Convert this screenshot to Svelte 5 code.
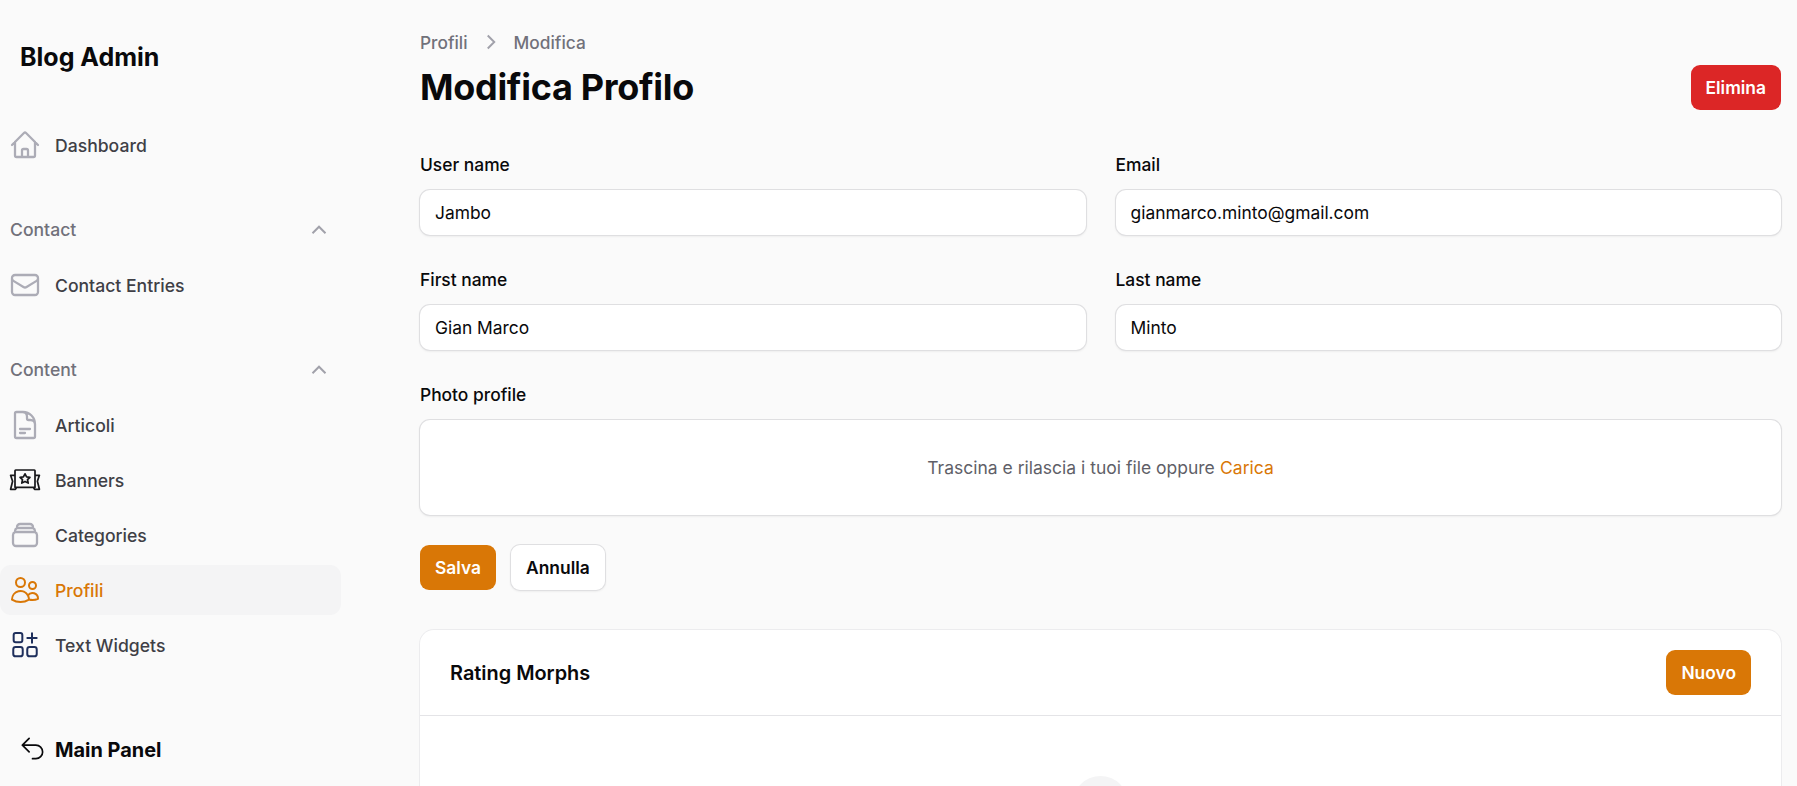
<script>
  const stroke = 1.5;
  let groups = [
    { items: [{ name: "Dashboard", icon: "home" }] },
    { label: "Contact", items: [{ name: "Contact Entries", icon: "mail" }] },
    {
      label: "Content",
      items: [
        { name: "Articoli", icon: "doc" },
        { name: "Banners", icon: "banner" },
        { name: "Categories", icon: "stack" },
        { name: "Profili", icon: "users", active: true },
        { name: "Text Widgets", icon: "squares" },
      ],
    },
  ];

  const paths = {
    home: "m2.25 12 8.954-8.955c.44-.439 1.152-.439 1.591 0L21.75 12M4.5 9.75v10.125c0 .621.504 1.125 1.125 1.125H9.75v-4.875c0-.621.504-1.125 1.125-1.125h2.25c.621 0 1.125.504 1.125 1.125V21h4.125c.621 0 1.125-.504 1.125-1.125V9.75M8.25 21h8.25",
    mail: "M21.75 6.75v10.5a2.25 2.25 0 0 1-2.25 2.25h-15a2.25 2.25 0 0 1-2.25-2.25V6.75m19.5 0A2.25 2.25 0 0 0 19.5 4.5h-15a2.25 2.25 0 0 0-2.25 2.25m19.5 0v.243a2.25 2.25 0 0 1-1.07 1.916l-7.5 4.615a2.25 2.25 0 0 1-2.36 0L3.32 8.91a2.25 2.25 0 0 1-1.07-1.916V6.75",
    doc: "M19.5 14.25v-2.625a3.375 3.375 0 0 0-3.375-3.375h-1.5A1.125 1.125 0 0 1 13.5 7.125v-1.5a3.375 3.375 0 0 0-3.375-3.375H8.25m0 12.75h7.5m-7.5 3H12M10.5 2.25H5.625c-.621 0-1.125.504-1.125 1.125v17.25c0 .621.504 1.125 1.125 1.125h12.75c.621 0 1.125-.504 1.125-1.125V11.25a9 9 0 0 0-9-9Z",
    stack: "M6 6.878V6a2.25 2.25 0 0 1 2.25-2.25h7.5A2.25 2.25 0 0 1 18 6v.878m-12 0c.235-.083.487-.128.75-.128h10.5c.263 0 .515.045.75.128m-12 0A2.25 2.25 0 0 0 4.5 9v.878m13.5-3A2.25 2.25 0 0 1 19.5 9v.878m0 0a2.246 2.246 0 0 0-.75-.128H5.25c-.263 0-.515.045-.75.128m15 0A2.25 2.25 0 0 1 21 12v6a2.25 2.25 0 0 1-2.25 2.25H5.25A2.25 2.25 0 0 1 3 18v-6c0-.98.626-1.813 1.5-2.122",
    users: "M15 19.128a9.38 9.38 0 0 0 2.625.372 9.337 9.337 0 0 0 4.121-.952 4.125 4.125 0 0 0-7.533-2.493M15 19.128v-.003c0-1.113-.285-2.16-.786-3.07M15 19.128v.106A12.318 12.318 0 0 1 8.624 21c-2.331 0-4.512-.645-6.374-1.766l-.001-.109a6.375 6.375 0 0 1 11.964-3.07M12 6.375a3.375 3.375 0 1 1-6.75 0 3.375 3.375 0 0 1 6.75 0Zm8.25 2.25a2.625 2.625 0 1 1-5.25 0 2.625 2.625 0 0 1 5.25 0Z",
    squares: "M17.250 3.250v7M13.750 6.750h7M5 3h3.500a1.500 1.500 0 0 1 1.500 1.500V8.500a1.500 1.500 0 0 1-1.500 1.500H5a1.500 1.500 0 0 1-1.500-1.500V4.500A1.500 1.500 0 0 1 5 3ZM5 13.500h3.500a1.800 1.800 0 0 1 1.800 1.800v3.400a1.800 1.800 0 0 1-1.800 1.800H5a1.800 1.800 0 0 1-1.800-1.800v-3.400A1.800 1.800 0 0 1 5 13.500ZM15.500 13.500H19a1.800 1.800 0 0 1 1.800 1.800v3.400a1.800 1.800 0 0 1-1.800 1.800h-3.500a1.800 1.800 0 0 1-1.800-1.800v-3.400a1.800 1.800 0 0 1 1.800-1.800Z",
    banner: "M5 4.500h14a.5.5 0 0 1 .5.5v12.500h-15V5a.5.5 0 0 1 .5-.5ZM4.500 8.500H1.200l1.500 4.500-1.500 6h3.600l1-1.500M19.500 8.500h3.300l-1.500 4.500 1.500 6h-3.600l-1-1.500M12 7.400l1.200 2.300 2.500.3-1.800 1.800.5 2.500-2.400-1.200-2.400 1.200.5-2.500-1.800-1.800 2.500-.3Z",
    back: "M9 15 3 9m0 0 6-6M3 9h12a6 6 0 0 1 0 12h-3",
  };
</script>

<div class="layout">
  <aside class="sidebar">
    <div class="brand">Blog Admin</div>

    <nav class="nav">
      {#each groups as group}
        <div class="group">
          {#if group.label}
            <div class="group-label">
              <span>{group.label}</span>
              <svg class="chev" viewBox="0 0 20 20" fill="none" stroke="currentColor" stroke-width={stroke}>
                <path d="M5 12.500l5-5 5 5" />
              </svg>
            </div>
          {/if}
          <ul>
            {#each group.items as item}
              <li class="item" class:active={item.active}>
                <svg
                  class="icon {item.icon}"
                  viewBox="0 0 24 24"
                  fill="none"
                  stroke="currentColor"
                  stroke-linecap="round"
                  stroke-linejoin="round"
                >
                  <path d={paths[item.icon]} />
                </svg>
                <span>{item.name}</span>
              </li>
            {/each}
          </ul>
        </div>
      {/each}
    </nav>

    <div class="main-panel">
      <svg class="icon-back" viewBox="0 0 24 24" fill="none" stroke="currentColor" stroke-width={stroke} stroke-linecap="round" stroke-linejoin="round">
        <path d={paths.back} />
      </svg>
      <span>Main Panel</span>
    </div>
  </aside>

  <main class="content">
    <div class="crumbs">
      <span>Profili</span>
      <svg viewBox="0 0 20 20" fill="none" stroke="currentColor" stroke-width="1.500"><path d="M7.500 5l5 5-5 5" /></svg>
      <span>Modifica</span>
    </div>

    <header class="page-head">
      <h1>Modifica Profilo</h1>
      <button class="btn danger">Elimina</button>
    </header>

    <form class="form" on:submit|preventDefault>
      <div class="grid">
        <label class="field">
          <span>User name</span>
          <input value="Jambo" />
        </label>
        <label class="field">
          <span>Email</span>
          <input value="gianmarco.minto@gmail.com" />
        </label>
        <label class="field">
          <span>First name</span>
          <input value="Gian Marco" />
        </label>
        <label class="field">
          <span>Last name</span>
          <input value="Minto" />
        </label>
      </div>

      <div class="field upload-field">
        <span>Photo profile</span>
        <div class="dropzone">Trascina e rilascia i tuoi file oppure <b>Carica</b></div>
      </div>

      <div class="actions">
        <button class="btn primary">Salva</button>
        <button class="btn plain" type="button">Annulla</button>
      </div>
    </form>

    <section class="card">
      <div class="card-head">
        <h2>Rating Morphs</h2>
        <button class="btn primary">Nuovo</button>
      </div>
      <div class="card-body">
        <div class="empty-circle"></div>
      </div>
    </section>
  </main>
</div>

<style>
  :global(body) {
    background: #fafafa;
    font-family: Inter, "Liberation Sans", sans-serif;
    color: #09090b;
    overflow: hidden;
  }

  .layout {
    display: flex;
    height: 786px;
    overflow: hidden;
  }

  .sidebar {
    width: 341px;
    flex: none;
    display: flex;
    flex-direction: column;
  }
  .brand {
    font-size: 25px;
    font-weight: 700;
    line-height: 28px;
    padding: 43px 0 0 20px;
  }
  .nav {
    margin-top: 49px;
    display: flex;
    flex-direction: column;
    gap: 45px;
  }
  ul {
    list-style: none;
    margin: 0;
    padding: 0;
    display: flex;
    flex-direction: column;
    gap: 5px;
  }
  .group-label {
    display: flex;
    align-items: center;
    justify-content: space-between;
    height: 27px;
    padding: 0 9px 0 10px;
    margin: 1px 0 17px;
    font-size: 17.600px;
    font-weight: 450;
    color: #71717a;
  }
  .chev {
    width: 26px;
    height: 26px;
    color: #a1a1aa;
  }
  .item {
    display: flex;
    align-items: center;
    gap: 14px;
    height: 50px;
    padding-left: 9px;
    border-radius: 11px;
    font-size: 17.600px;
    font-weight: 450;
    color: #3f3f46;
  }
  .item .icon {
    width: 32px;
    height: 32px;
    flex: none;
    color: #acacb6;
    stroke-width: 1.700;
  }
  .item .icon.banner {
    color: #18181b;
    stroke-width: 1.300;
  }
  .item .icon.squares {
    color: #1e2f5c;
    stroke-width: 1.500;
  }
  .item.active {
    background: #f4f4f5;
    color: #d97706;
  }
  .item.active .icon {
    color: #d97706;
    stroke-width: 1.500;
  }
  .main-panel {
    margin-top: auto;
    margin-bottom: 22px;
    padding-left: 19px;
    display: flex;
    align-items: center;
    gap: 9px;
    height: 28px;
    font-size: 19.900px;
    font-weight: 700;
    color: #09090b;
  }
  .icon-back {
    width: 27px;
    height: 27px;
    flex: none;
    margin-top: -3px;
  }

  .content {
    flex: 1;
    min-width: 0;
    padding: 31px 16px 0 79px;
  }
  .crumbs {
    display: flex;
    align-items: center;
    gap: 10px;
    height: 22px;
    font-size: 17.300px;
    font-weight: 500;
    color: #71717a;
  }
  .crumbs svg {
    width: 26px;
    height: 26px;
    color: #a1a1aa;
  }
  .page-head {
    display: flex;
    align-items: center;
    justify-content: space-between;
    margin-top: 12px;
    height: 45px;
  }
  h1 {
    margin: 0;
    font-size: 36px;
    font-weight: 700;
    letter-spacing: -0.300px;
    line-height: 45px;
  }
  .form {
    margin-top: 43px;
  }
  .grid {
    display: grid;
    grid-template-columns: 1fr 1fr;
    column-gap: 30px;
    row-gap: 32px;
  }
  .field {
    display: flex;
    flex-direction: column;
    gap: 13px;
    font-size: 17.400px;
    font-weight: 500;
    line-height: 23px;
  }
  input {
    box-sizing: border-box;
    height: 45px;
    width: 100%;
    margin: 1px 0;
    padding: 0 15px;
    border: none;
    border-radius: 10px;
    background: #fff;
    font: 400 17.400px Inter, sans-serif;
    color: #09090b;
    box-shadow: 0 0 0 1px #dfdfe1, 0 1px 2px 1px rgba(0, 0, 0, 0.05);
    outline: none;
  }
  .upload-field {
    margin-top: 32px;
  }
  .dropzone {
    box-sizing: border-box;
    height: 95px;
    margin: 1px 0;
    display: flex;
    align-items: center;
    justify-content: center;
    gap: 0.3em;
    background: #fff;
    border-radius: 10px;
    box-shadow: 0 0 0 1px #dfdfe1, 0 1px 2px 1px rgba(0, 0, 0, 0.05);
    color: #5f5f68;
    font-size: 17.500px;
    font-weight: 400;
  }
  .dropzone b {
    font-weight: 400;
    color: #d97706;
  }
  .actions {
    display: flex;
    align-items: center;
    gap: 15px;
    margin-top: 29px;
  }
  .btn {
    border: none;
    height: 45px;
    padding: 0 15px;
    border-radius: 9px;
    font: 600 17.400px Inter, sans-serif;
    color: #fff;
  }
  .btn.primary {
    background: #d97706;
  }
  .btn.danger {
    background: #dc2626;
  }
  .btn.plain {
    background: #fff;
    color: #09090b;
    box-shadow: 0 0 0 1px #dfdfe1, 0 1px 2px 1px rgba(0, 0, 0, 0.05);
  }
  .card {
    margin-top: 40px;
    background: #fff;
    border-radius: 14px;
    box-shadow: 0 0 0 1px #ececee;
  }
  .card-head {
    display: flex;
    align-items: center;
    justify-content: space-between;
    height: 85px;
    padding: 0 30px;
    border-bottom: 1px solid #e4e4e7;
  }
  h2 {
    margin: 0;
    font-size: 19.900px;
    font-weight: 600;
  }
  .card-body {
    display: flex;
    justify-content: center;
    padding-top: 60px;
    height: 200px;
  }
  .empty-circle {
    width: 55px;
    height: 55px;
    flex: none;
    border-radius: 50%;
    background: #f4f4f5;
  }
</style>
